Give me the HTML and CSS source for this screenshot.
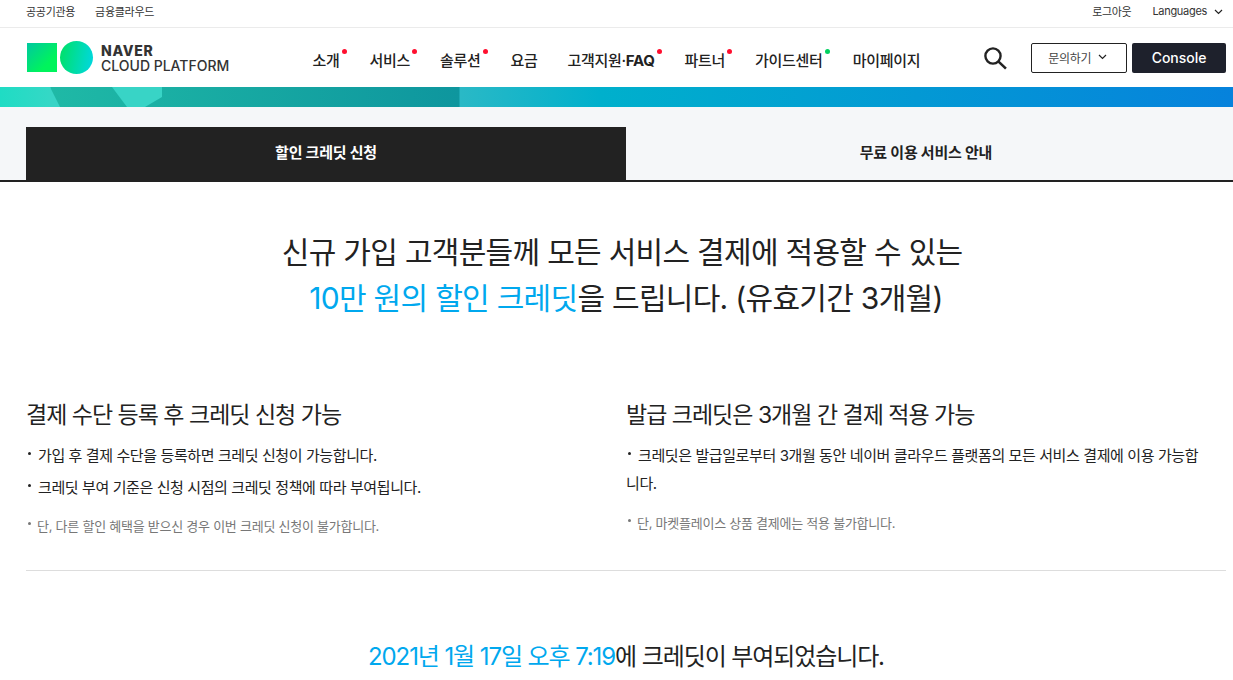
FILE: index.html
```html
<!DOCTYPE html>
<html lang="ko">
<head>
    <meta charset="UTF-8">
    <title>NAVER CLOUD PLATFORM</title>
    <link rel="stylesheet" href="styles.css">
</head>
<body>
<div class="util-bar">
    <div class="util-links">
        <a>공공기관용</a>
        <a>금융클라우드</a>
    </div>
    <div class="util-links util-right">
        <a>로그아웃</a>
        <a class="lang">Languages
            <svg class="chev" width="9" height="6" viewBox="0 0 9 6"><path d="M1 1l3.5 3.5L8 1" fill="none" stroke="#222" stroke-width="1.2"/></svg>
        </a>
    </div>
</div>

<header class="header">
    <div class="logo">
        <div class="logo-mark">
            <span class="logo-square"></span>
            <span class="logo-circle"></span>
        </div>
        <div class="logo-text">
            <strong>NAVER</strong>
            <span>CLOUD PLATFORM</span>
        </div>
    </div>
    <nav class="nav">
        <a class="dot">소개</a>
        <a class="dot">서비스</a>
        <a class="dot">솔루션</a>
        <a>요금</a>
        <a class="dot">고객지원·<b>FAQ</b></a>
        <a class="dot">파트너</a>
        <a class="dot dot-green">가이드센터</a>
        <a>마이페이지</a>
    </nav>
    <svg class="search" width="24" height="24" viewBox="0 0 24 24"><circle cx="10" cy="10" r="7.6" fill="none" stroke="#222" stroke-width="2.4"/><path d="M15.6 15.6L23 22.6" fill="none" stroke="#222" stroke-width="2.6"/></svg>
    <button class="btn-ask">문의하기
        <svg width="9" height="6" viewBox="0 0 9 6"><path d="M1 1l3.5 3.5L8 1" fill="none" stroke="#222" stroke-width="1.2"/></svg>
    </button>
    <button class="btn-console">Console</button>
</header>

<div class="banner">
    <span class="shape shape-a"></span>
    <span class="shape shape-b"></span>
</div>

<div class="tabs">
    <div class="tab tab-active">할인 크레딧 신청</div>
    <div class="tab">무료 이용 서비스 안내</div>
</div>

<main class="content">
    <h1 class="lead">신규 가입 고객분들께 모든 서비스 결제에 적용할 수 있는&nbsp;<br><em>10만 원의 할인 크레딧</em>을 드립니다. (유효기간 3개월)</h1>

    <div class="columns">
        <section class="col">
            <h2>결제 수단 등록 후 크레딧 신청 가능</h2>
            <ul class="points">
                <li>가입 후 결제 수단을 등록하면 크레딧 신청이 가능합니다.</li>
                <li>크레딧 부여 기준은 신청 시점의 크레딧 정책에 따라 부여됩니다.</li>
            </ul>
            <p class="note">단, 다른 할인 혜택을 받으신 경우 이번 크레딧 신청이 불가합니다.</p>
        </section>
        <section class="col col-right">
            <h2>발급 크레딧은 3개월 간 결제 적용 가능</h2>
            <ul class="points">
                <li>크레딧은 발급일로부터 3개월 동안 네이버 클라우드 플랫폼의 모든 서비스 결제에 이용 가능합니다.</li>
            </ul>
            <p class="note">단, 마켓플레이스 상품 결제에는 적용 불가합니다.</p>
        </section>
    </div>

    <p class="granted"><em>2021년 1월 17일 오후 7:19</em>에 크레딧이 부여되었습니다.</p>
</main>
</body>
</html>
```

FILE: styles.css
```css
body {
    margin: 0;
    height: 680px;
    overflow: hidden;
    background-color: #fff;
    color: #222;
    font-family: 'Inter', 'Noto Sans CJK KR', sans-serif;
}
em {
    font-style: normal;
    color: #00a8ee;
}
.util-bar {
    display: flex;
    justify-content: space-between;
    height: 27px;
    padding: 0 10px 0 26px;
    border-bottom: 1px solid #ebebeb;
}
.util-links {
    display: flex;
    gap: 20px;
    font-size: 11px;
    line-height: 25px;
    letter-spacing: -0.3px;
    color: #333;
}
.util-right {
    gap: 21px;
}
.lang {
    display: flex;
    align-items: center;
    gap: 7px;
    height: 23px;
}
.header {
    display: flex;
    align-items: center;
    height: 59px;
    padding: 0 7px 0 27px;
}
.logo {
    display: flex;
    align-items: center;
    width: 285px;
}
.logo-mark {
    display: flex;
    align-items: center;
    gap: 3px;
    margin-right: 8px;
}
.logo-square {
    width: 30px;
    height: 29px;
    background: linear-gradient(135deg, #00c8a0 0%, #00f45c 70%);
}
.logo-circle {
    width: 33px;
    height: 33px;
    border-radius: 50%;
    background: linear-gradient(100deg, #00e070 10%, #00d8d8 90%);
}
.logo-text {
    display: flex;
    flex-direction: column;
    font-size: 14px;
    line-height: 15px;
    color: #333;
}
.logo-text strong {
    font-weight: 800;
    letter-spacing: 0.7px;
}
.logo-text span {
    font-weight: 500;
}
.nav {
    display: flex;
    gap: 30px;
    width: 672px;
    margin-left: 1px;
    margin-top: 3px;
    font-size: 15px;
    font-weight: 500;
    letter-spacing: -0.3px;
}
.dot {
    position: relative;
}
.dot::after {
    content: "";
    position: absolute;
    top: 0;
    right: -7px;
    width: 5px;
    height: 5px;
    border-radius: 50%;
    background-color: #ff0f2f;
}
.dot-green::after {
    background-color: #00d060;
}
.search {
    margin-right: 24px;
}
button {
    box-sizing: border-box;
    height: 30px;
    border-radius: 2px;
    font-family: inherit;
    padding: 0;
}
.btn-ask {
    display: flex;
    align-items: center;
    justify-content: center;
    gap: 7px;
    width: 96px;
    margin-right: 5px;
    padding: 0 3px 1px 0;
    background-color: #fff;
    border: 1px solid #222;
    font-size: 12px;
    letter-spacing: -0.3px;
    color: #444;
}
.btn-console {
    width: 94px;
    background-color: #1e212c;
    border: none;
    color: #fff;
    font-size: 14px;
    font-weight: 500;
}
.banner {
    position: relative;
    height: 20px;
    overflow: hidden;
    background: linear-gradient(90deg, #1fdcc4 0, #34d8c6 50px, #1fb9a6 51px, #0e969e 459px, #2ab9c6 460px, #00b0cc 600px, #0682dc 1233px);
}
.shape {
    position: absolute;
    top: 0;
    height: 20px;
    background-color: #38d4c6;
}
.shape-a {
    left: 50px;
    width: 10px;
    clip-path: polygon(0 0, 100% 100%, 0 100%);
}
.shape-b {
    left: 112px;
    width: 50px;
    clip-path: polygon(0 0, 100% 0, 100% 50%, 66% 100%, 30% 100%);
}
.tabs {
    display: flex;
    padding: 20px 7px 0 26px;
    background-color: #f5f7f9;
    border-bottom: 2px solid #222;
}
.tab {
    flex: 1;
    height: 53px;
    text-align: center;
    font-size: 15px;
    font-weight: 700;
    line-height: 51px;
    letter-spacing: -0.2px;
}
.tab-active {
    background-color: #222;
    color: #fff;
}
.content {
    padding: 0 7px 0 26px;
}
.lead {
    margin: 47px 0 0;
    text-align: center;
    font-size: 30px;
    font-weight: 400;
    line-height: 46px;
    letter-spacing: -0.7px;
}
.columns {
    display: flex;
    margin-top: 78px;
    padding-bottom: 32px;
    border-bottom: 1px solid #ddd;
}
.col {
    flex: 0 0 50%;
    box-sizing: border-box;
}
.col-right {
    padding-right: 20px;
}
.col h2 {
    margin: 0;
    font-size: 23px;
    font-weight: 400;
    line-height: 32px;
    letter-spacing: -1px;
}
.points {
    list-style: none;
    margin: 11px 0 0;
    padding: 0;
    font-size: 15px;
    line-height: 28px;
    letter-spacing: -0.4px;
}
.points li {
    position: relative;
    margin-bottom: 4px;
    padding-left: 12px;
}
.points li::before,
.note::before {
    content: "";
    position: absolute;
    left: 2px;
    top: 10px;
    width: 3px;
    height: 3px;
    border-radius: 50%;
    background-color: #222;
}
.col-right .points li {
    text-indent: 12px;
    padding-left: 0;
}
.note {
    position: relative;
    margin: 12px 0 0;
    padding-left: 11px;
    font-size: 13px;
    line-height: 24px;
    letter-spacing: -0.25px;
    color: #777;
}
.col-right .note {
    margin-top: 13px;
}
.note::before {
    top: 8px;
    background-color: #777;
}
.granted {
    margin: 68px 0 0;
    text-align: center;
    font-size: 24px;
    line-height: 36px;
    letter-spacing: -1.1px;
}
```
